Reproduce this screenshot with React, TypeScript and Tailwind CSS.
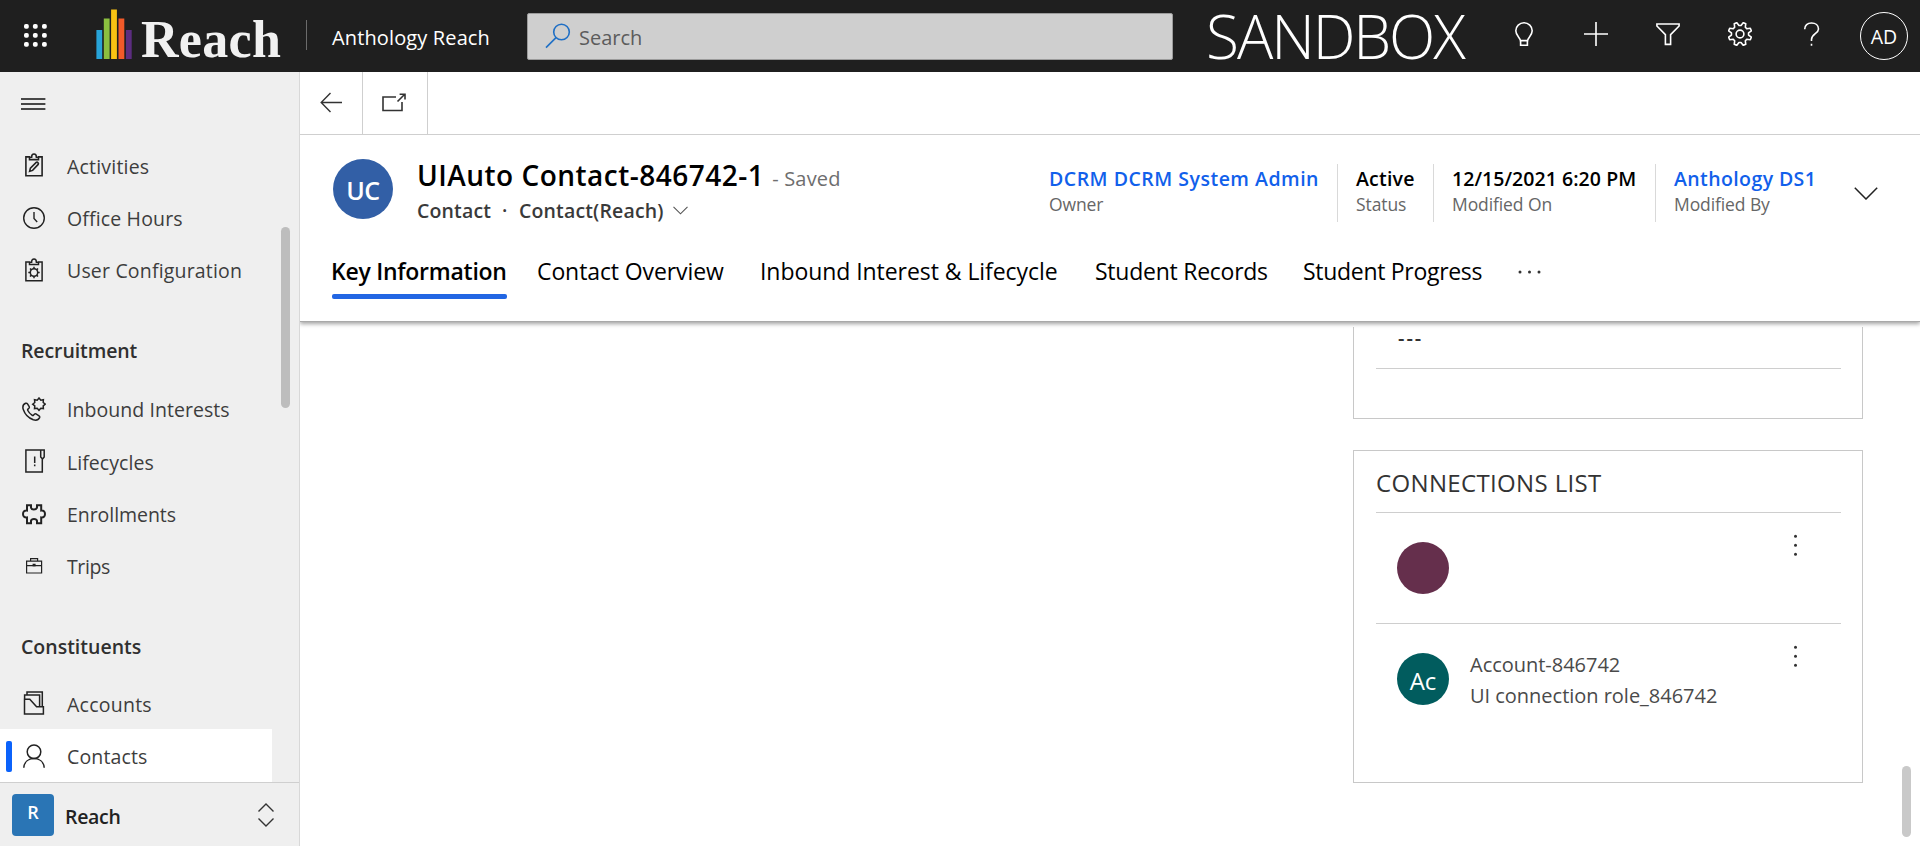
import type { ReactNode } from "react";

function gearPoints(cx: number, cy: number, outer: number, inner: number, teeth: number, flat: number) {
  const pts: string[] = [];
  const step = (Math.PI * 2) / teeth;
  for (let i = 0; i < teeth; i++) {
    const a = i * step - Math.PI / 2 + step / 2;
    const spots: [number, number][] = [
      [a - step * (0.5 - flat), inner],
      [a - step * flat, outer],
      [a + step * flat, outer],
      [a + step * (0.5 - flat), inner],
    ];
    spots.forEach(([t, r]) => pts.push(`${(cx + Math.cos(t) * r).toFixed(2)},${(cy + Math.sin(t) * r).toFixed(2)}`));
  }
  return pts.join(" ");
}

function Icon({ children, className = "", stroke = 1.6 }: { children: ReactNode; className?: string; stroke?: number }) {
  return (
    <svg viewBox="0 0 24 24" width="24" height="24" fill="none" stroke="currentColor" strokeWidth={stroke} className={`shrink-0 ${className}`}>
      {children}
    </svg>
  );
}

const Clipboard = () => (
  <path d="M8 3.9H3.9V22.8H20.1V3.9H16M7.5 6.6V4.2H9.6C9.6 1.8 10.6 1 12 1S14.4 1.8 14.4 4.2H16.5V6.6Z" />
);

const icons: Record<string, ReactNode> = {
  activities: (
    <Icon>
      <Clipboard />
      <path d="M7.6 18.4L8.4 15.2L14.2 9.4Q15.2 8.8 16 9.7T16.2 11.4L10.6 17.4Z" />
    </Icon>
  ),
  clock: (
    <Icon stroke={1.4}>
      <circle cx="12" cy="12" r="10.3" />
      <path d="M12 6V12.5L15.2 16" />
    </Icon>
  ),
  config: (
    <Icon stroke={1.5}>
      <Clipboard />
      <circle cx="12" cy="14.5" r="3.7" />
      <path d="M12 10.8V8.8M12 18.2V20.2M8.3 14.5H6.3M15.7 14.5H17.7M9.4 11.9L8 10.5M14.6 17.1L16 18.5M14.6 11.9L16 10.5M9.4 17.1L8 18.5" />
    </Icon>
  ),
  inbound: (
    <Icon stroke={1.5}>
      <polygon points="17,1 18.8,3.2 21.4,2.7 21.2,5.5 23.3,7.2 21.2,8.9 21.4,11.6 18.8,11.2 17,13.3 15.2,11.2 12.5,11.6 12.8,8.9 10.7,7.2 12.8,5.5 12.5,2.7 15.2,3.2" />
      <path d="M3.6 6.3C1.2 7.4 0.4 9.9 1.3 12.6C2.9 17.4 6.6 21.2 11.3 22.8C14.2 23.7 16.5 22.9 17.6 20.6Q18 19.5 17 18.8L14 16.9Q13.1 16.5 12.4 17.2L11.4 18.3Q10.8 18.8 10 18.2C8 16.8 6.8 15.4 5.8 13.5Q5.4 12.7 6 12.1L6.9 11.3Q7.6 10.6 7.2 9.7L5.5 6.9Q4.8 5.8 3.6 6.3Z" />
    </Icon>
  ),
  lifecycles: (
    <Icon stroke={1.5}>
      <path d="M18.7 1H3.9V23.1H20.3V9.5M18.7 1H22.2V8L20.5 10L18.7 8V1" />
      <path d="M12.7 7.5V14M12.7 15.6V17.2" />
    </Icon>
  ),
  enrollments: (
    <Icon stroke={2}>
      <path d="M5 3.2H9V5.6Q9.4 7.5 11.8 7.5T15 5.6V3.2H19.2V8.6C21.5 8.2 23 9.6 23 12S21.5 15.8 19.2 15.4V21.2H15V18.8Q14.6 17 12 17T9 18.8V21.2H5V15.4C2.5 15.8 1 14.4 1 12S2.5 8.2 5 8.6Z" />
    </Icon>
  ),
  trips: (
    <Icon stroke={1.2}>
      <path d="M4.6 7.2H19.6V19H4.6ZM8.6 7V4.6H15.6V7M4.6 11.6H19.6M11.2 10.4H13V12H11.2Z" />
    </Icon>
  ),
  accounts: (
    <Icon stroke={1.5}>
      <path d="M5 3.9V1H20.3V15.5M2.6 8V4H17.6V16M2.5 8.3H7.8L14.6 15.8H21.4V23.1H2.5Z" />
    </Icon>
  ),
  contacts: (
    <Icon stroke={1.5}>
      <circle cx="12" cy="7.8" r="6.8" />
      <path d="M1.8 23.8C2.2 18 6.4 14.6 12 14.6S21.8 18 22.2 23.8" />
    </Icon>
  ),
};

function NavItem({ icon, label, tracking, active = false }: { icon: string; label: string; tracking: string; active?: boolean }) {
  return (
    <li className={`flex w-[272px] items-center text-[#3d3d3d] ${active ? "-mt-[2px] h-[54.4px] bg-white pt-[2px]" : "h-[52.4px]"}`}>
      <span className={`ml-[6px] h-[31px] w-[6px] rounded-[2px] ${active ? "bg-[#0b62fb]" : ""}`} />
      <span className="mr-[21px] -mt-[2px] ml-[10px] text-[#222]">{icons[icon]}</span>
      <span className={`pt-px whitespace-nowrap text-[19.5px] leading-[26px] ${tracking}`}>{label}</span>
    </li>
  );
}

function NavHeading({ label, className }: { label: string; className: string }) {
  return <h2 className={`flex items-center pl-[21px] text-[19.5px] font-semibold text-[#303030] ${className}`}>{label}</h2>;
}

function Sidebar() {
  return (
    <aside className="flex w-[300px] shrink-0 flex-col border-r border-[#d8d8d8] bg-[#efefef]">
      <div className="flex h-[68px] shrink-0 items-start pt-[26px] pl-[21px]">
        <svg width="25" height="12" stroke="#111" strokeWidth="1.3">
          <path d="M0 1H24.4M0 6H24.4M0 11H24.4" />
        </svg>
      </div>
      <div className="flex h-[642px] justify-between overflow-hidden">
        <ul>
          <NavItem icon="activities" label="Activities" tracking="tracking-[0.2px]" />
          <NavItem icon="clock" label="Office Hours" tracking="tracking-[0.15px]" />
          <NavItem icon="config" label="User Configuration" tracking="tracking-[0.18px]" />
          <NavHeading label="Recruitment" className="h-[86.4px] pt-[20px] tracking-[-0.1px]" />
          <NavItem icon="inbound" label="Inbound Interests" tracking="tracking-[0.05px]" />
          <NavItem icon="lifecycles" label="Lifecycles" tracking="tracking-[0.05px]" />
          <NavItem icon="enrollments" label="Enrollments" tracking="tracking-[-0.05px]" />
          <NavItem icon="trips" label="Trips" tracking="tracking-[-0.4px]" />
          <NavHeading label="Constituents" className="h-[85px] pt-[22px]" />
          <NavItem icon="accounts" label="Accounts" tracking="tracking-[0.25px]" />
          <NavItem icon="contacts" label="Contacts" tracking="tracking-[0.15px]" active />
        </ul>
        <div className="mt-[87px] mr-[9px] h-[181px] w-[9px] rounded-full bg-[#bdbdbd]" />
      </div>
      <div className="flex flex-1 items-center border-t border-[#cfcfcf] pl-[12px]">
        <div className="flex h-[42px] w-[42px] items-center justify-center rounded-[4px] bg-[#2a75b5] pb-[4px] text-[18px] font-semibold text-white">R</div>
        <span className="ml-[11px] pt-[4px] text-[19.5px] leading-[24px] font-semibold tracking-[-0.3px] text-[#222]">Reach</span>
        <svg width="16" height="24" viewBox="0 0 16 24" fill="none" stroke="#333" strokeWidth="1.4" className="ml-auto mr-[25px]">
          <path d="M0.5 8.5L8 1L15.5 8.5M0.5 15.5L8 23L15.5 15.5" />
        </svg>
      </div>
    </aside>
  );
}

function TopBar() {
  const dots = [3.4, 12.3, 21.4];
  return (
    <header className="flex h-[72px] shrink-0 items-center bg-[#1f1f1f] text-white">
      <svg width="25" height="25" className="ml-[23px] -mt-[2px] shrink-0" fill="#fff">
        {dots.map((x) => dots.map((y) => <rect key={`${x}-${y}`} x={x - 2.4} y={y - 2.4} width="4.8" height="4.8" rx="1.8" />))}
      </svg>
      <svg width="36" height="50" className="ml-[48px] -mt-[4px] shrink-0">
        <rect x="0.4" y="21" width="5.8" height="29" fill="#27a3d8" />
        <rect x="7.8" y="9.5" width="5.8" height="40.5" fill="#8bbf3f" />
        <rect x="15.1" y="0.5" width="5.8" height="49.5" fill="#f9c213" />
        <rect x="22.5" y="9.5" width="5.8" height="40.5" fill="#f15a29" />
        <rect x="29.9" y="21" width="5.8" height="29" fill="#5c2d80" />
      </svg>
      <span className="mt-[7px] ml-[9px] w-[140px] font-['Liberation_Serif',serif] text-[52px] leading-[60px] font-bold tracking-[0.3px] text-[#f1f1f1]">Reach</span>
      <span className="-mt-[2px] ml-[25px] h-[30px] w-px bg-[#6b6b6b]" />
      <span className="mt-[3px] ml-[25px] w-[170px] text-[20px] leading-[26px] tracking-[0.13px] whitespace-nowrap">Anthology Reach</span>
      <div className="ml-[25px] flex h-[47px] w-[646px] shrink-0 items-center rounded-[2px] border border-[#9b9b9b] bg-[#cfcfcf] text-[20px] text-[#5c5c5c]">
        <svg width="26" height="26" viewBox="0 0 26 26" fill="none" stroke="#1f6fc5" strokeWidth="1.6" className="ml-[17px]">
          <circle cx="16.5" cy="9" r="7.8" />
          <path d="M11 14.6L1 24.6" />
        </svg>
        <span className="ml-[8px] pt-[3px] leading-[26px]">Search</span>
      </div>
      <span className="ml-[33px] w-[264px] shrink-0 text-[60.5px] leading-[72px] font-light tracking-[-2.1px]">SANDBOX</span>
      <div className="ml-[42px] -mt-[4px] flex gap-[48px]">
        <Icon>
          <path d="M8.4 18.6C8.4 15.6 3.8 13.6 3.8 8.8A8.2 8 0 0 1 20.2 8.8C20.2 13.6 15.6 15.6 15.6 18.6ZM8.6 18.6V23.2H15.4V18.6" />
        </Icon>
        <Icon>
          <path d="M12 0V24M0 12H24" />
        </Icon>
        <Icon>
          <path d="M0.9 2H23.1V4L14.6 12.6V22.4H9.4V12.6L0.9 4Z" />
        </Icon>
        <Icon>
          <polygon points={gearPoints(12, 12, 11.8, 8.6, 8, 0.15)} strokeLinejoin="round" />
          <circle cx="12" cy="12" r="3.9" />
        </Icon>
        <Icon>
          <path d="M4.7 7.2C4.7 3.4 7.5 1 11.5 1S18.5 3.4 18.5 7C18.5 11.6 11.5 12 11.5 17.6V19M11.5 21.8V23.8" />
        </Icon>
      </div>
      <div className="ml-[36px] flex h-[48px] w-[48px] items-center justify-center rounded-full border border-white pt-[2px] text-[19.5px] leading-[24px]">AD</div>
    </header>
  );
}

function Field({ value, label, className, link = false, tracking = "" }: { value: string; label: string; className: string; link?: boolean; tracking?: string }) {
  return (
    <div className={`h-[58px] pt-[3px] whitespace-nowrap ${className}`}>
      <div className={`text-[19.5px] leading-[24px] font-semibold ${link ? "text-[#1160eb]" : "text-black"} ${tracking}`}>{value}</div>
      <div className="mt-[2px] text-[17.5px] leading-[23px] tracking-[-0.1px] text-[#666]">{label}</div>
    </div>
  );
}

function Tab({ label, className, active = false }: { label: string; className: string; active?: boolean }) {
  return (
    <div className={`text-[23px] leading-[32px] whitespace-nowrap text-black ${className}`}>
      {label}
      {active && <div className="mt-[7px] ml-px h-[5px] w-[175px] rounded-[2px] bg-[#2266e3]" />}
    </div>
  );
}

function RecordHeader() {
  return (
    <section className="z-10 h-[187px] shrink-0 border-b border-[#a9a9a9] bg-white shadow-[0_2px_4px_rgba(0,0,0,0.36)] [clip-path:inset(0_0_-8px_0)]">
      <div className="flex h-[120px] items-start pl-[33px]">
        <div className="mt-[24px] flex h-[60px] w-[60px] items-center justify-center rounded-full bg-[#325fa6] pt-[3px] text-[25px] font-semibold tracking-[-0.5px] text-white">UC</div>
        <div className="mt-[22px] ml-[24px] w-[632px] whitespace-nowrap">
          <div className="flex h-[36px] items-baseline leading-[36px]">
            <h1 className="text-[28px] font-semibold tracking-[0.48px] text-black">UIAuto Contact-846742-1</h1>
            <span className="ml-[8px] text-[20px] tracking-[0.2px] text-[#6e6e6e]">- Saved</span>
          </div>
          <div className="mt-[5px] flex items-center text-[19.5px] leading-[24px] font-semibold text-[#3a3a3a]">
            <span className="w-[85px] tracking-[0.15px]">Contact</span>
            <span className="w-[17px]">·</span>
            <span className="w-[154px] pt-[1px] tracking-[0.15px]">Contact(Reach)</span>
            <svg width="15" height="9" fill="none" stroke="#555" strokeWidth="1.1">
              <path d="M0.5 0.8L7.5 7.8L14.5 0.8" />
            </svg>
          </div>
        </div>
        <div className="mt-[29px] flex">
          <Field className="w-[288px]" value="DCRM DCRM System Admin" label="Owner" link tracking="tracking-[0.5px]" />
          <Field className="w-[96px] border-l border-[#d9d9d9] pl-[18px]" value="Active" label="Status" tracking="tracking-[0.2px]" />
          <Field className="w-[222px] border-l border-[#d9d9d9] pl-[18px]" value="12/15/2021 6:20 PM" label="Modified On" tracking="tracking-[0.05px]" />
          <Field className="w-[200px] border-l border-[#d9d9d9] pl-[18px]" value="Anthology DS1" label="Modified By" link tracking="tracking-[0.4px]" />
          <svg width="24" height="13" fill="none" stroke="#222" strokeWidth="1.5" className="mt-[23px] -ml-px">
            <path d="M0.8 0.8L12 12L23.2 0.8" />
          </svg>
        </div>
      </div>
      <div className="flex pl-[31px]">
        <Tab label="Key Information" className="w-[206px] font-semibold tracking-[-0.26px]" active />
        <Tab label="Contact Overview" className="w-[223px] tracking-[-0.1px]" />
        <Tab label="Inbound Interest & Lifecycle" className="w-[335px] tracking-[-0.06px]" />
        <Tab label="Student Records" className="w-[208px] tracking-[-0.25px]" />
        <Tab label="Student Progress" className="w-[216px] tracking-[-0.3px]" />
        <svg width="24" height="4" fill="#333" className="mt-[15px] -ml-px">
          <circle cx="2" cy="2" r="1.5" />
          <circle cx="11.5" cy="2" r="1.5" />
          <circle cx="21" cy="2" r="1.5" />
        </svg>
      </div>
    </section>
  );
}

function Connection({ initials, color, lines, className }: { initials?: string; color: string; lines?: string[]; className: string }) {
  return (
    <div className={`flex items-start border-t border-[#cecece] pl-[21px] ${className}`}>
      <div className={`mt-[29px] flex h-[52px] w-[52px] shrink-0 items-center justify-center rounded-full pt-[3px] text-[24px] leading-[28px] text-white ${color}`}>{initials}</div>
      <div className="mt-[25px] ml-[21px] w-[314px] text-[20px] leading-[31px] tracking-[-0.02px] text-[#4a4a4a]">
        {lines?.map((l) => (
          <div key={l} className="whitespace-nowrap">{l}</div>
        ))}
      </div>
      <svg width="24" height="24" fill="#333" className="mt-[21px]">
        <circle cx="11.5" cy="2.2" r="1.5" />
        <circle cx="11.5" cy="11.2" r="1.5" />
        <circle cx="11.5" cy="20.2" r="1.5" />
      </svg>
    </div>
  );
}

export default function App() {
  return (
    <div className="flex h-[846px] w-[1920px] flex-col overflow-hidden bg-white font-['Open_Sans','Noto_Sans',sans-serif]">
      <TopBar />
      <div className="flex min-h-0 flex-1">
        <Sidebar />
        <main className="flex min-w-0 flex-1 flex-col">
          <div className="flex h-[63px] shrink-0 border-b border-[#cfcfcf]">
            <div className="flex w-[63px] items-center border-r border-[#cfcfcf] pb-[2px] pl-[20px]">
              <svg width="22" height="21" fill="none" stroke="#333" strokeWidth="1.4">
                <path d="M22 10.5H1.5M10.5 1L1.2 10.5L10.5 20" />
              </svg>
            </div>
            <div className="flex w-[65px] items-center border-r border-[#cfcfcf] pb-[2px] pl-[19px]">
              <svg width="25" height="19" fill="none" stroke="#333" strokeWidth="1.6">
                <path d="M14 4H1V17.5H20V9M15.5 8.5L22.5 1.5M17.6 1.2H23V6.6" />
              </svg>
            </div>
          </div>
          <RecordHeader />
          <div className="flex min-h-0 flex-1 justify-end">
            <div className="w-[510px] pt-[5px]">
              <div className="h-[92px] border-x border-b border-[#c8c8c8] pr-[21px] pl-[22px]">
                <div className="h-[42px] border-b border-[#cecece] pl-[22px] text-[20px] leading-[22px] font-semibold tracking-[2px] text-[#333]">---</div>
              </div>
              <div className="mt-[31px] h-[333px] border border-[#c8c8c8] pr-[21px] pl-[22px]">
                <h2 className="h-[61px] pt-[16px] text-[24px] leading-[32px] tracking-[0.35px] text-[#333]">CONNECTIONS LIST</h2>
                <Connection color="bg-[#652f4c]" className="h-[111px]" />
                <Connection initials="Ac" color="bg-[#015c5e]" lines={["Account-846742", "UI connection role_846742"]} className="h-[140px]" />
              </div>
            </div>
            <div className="mt-[444px] mr-[9px] ml-[39px] h-[71px] w-[9px] rounded-full bg-[#c9c9c9]" />
          </div>
        </main>
      </div>
    </div>
  );
}
